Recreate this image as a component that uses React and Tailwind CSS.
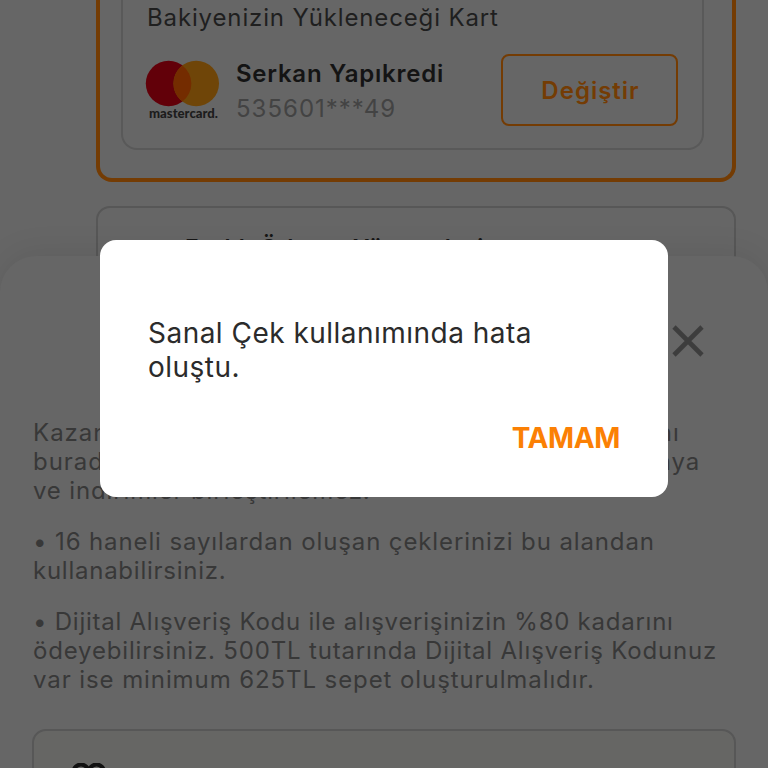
const infoParagraphs = [
  {
    lines: [
      { text: "Kazandığınız Dijital Alışveriş Kuponlarınızın tamamını", tracking: "tracking-[1px]" },
      { text: "buradan kullanabilirsiniz. Dijital kodlar diğer kampanya", tracking: "tracking-[0.94px]" },
      { text: "ve indirimler birleştirilemez.", tracking: "tracking-[0.85px]" },
    ],
  },
  {
    lines: [
      { text: "• 16 haneli sayılardan oluşan çeklerinizi bu alandan", tracking: "tracking-[0.88px]" },
      { text: "kullanabilirsiniz.", tracking: "tracking-[0.75px]" },
    ],
  },
  {
    lines: [
      { text: "• Dijital Alışveriş Kodu ile alışverişinizin %80 kadarını", tracking: "tracking-[0.75px]" },
      { text: "ödeyebilirsiniz. 500TL tutarında Dijital Alışveriş Kodunuz", tracking: "tracking-[0.83px]" },
      { text: "var ise minimum 625TL sepet oluşturulmalıdır.", tracking: "tracking-[0.91px]" },
    ],
  },
];

const App = () => {
  return (
    <div className="relative h-[768px] w-[768px] overflow-hidden bg-[#666666] font-['Inter',sans-serif]">
      {/* PAYMENT OPTIONS */}
      <div className="pl-24 pr-8">
        <div className="h-[182px] rounded-b-[16px] border-4 border-t-0 border-[#743c04] pl-[21px] pr-7 pb-7">
          <SavedCard />
        </div>

        <div className="mt-6 h-[120px] rounded-[14px] border-2 border-[#575757] pl-[87px] pt-[26px]">
          <p className="whitespace-nowrap text-[23px] leading-7 font-semibold tracking-[1.2px] text-[#161616]">
            Farklı Ödeme Yöntemleri
          </p>
        </div>
      </div>

      {/* BOTTOM SHEET */}
      <div className="absolute inset-x-0 top-[256px] h-[512px] rounded-t-[36px] bg-[#666666] px-8 pt-[69px] shadow-[0_-4px_32px_rgba(0,0,0,0.08)]">
        <div className="flex justify-end pr-8">
          <CloseIcon />
        </div>

        <div className="mt-[61px] flex flex-col gap-[22px] pl-px text-[24px] leading-[29px] text-[#383838]">
          {infoParagraphs.map((paragraph, i) => (
            <div key={i}>
              {paragraph.lines.map((line) => (
                <p key={line.text} className={`whitespace-nowrap ${line.tracking}`}>
                  {line.text}
                </p>
              ))}
            </div>
          ))}
        </div>

        <div className="mt-[35px] h-24 rounded-[14px] border-2 border-[#575757] bg-[#666664] pl-9 pt-8">
          <GiftIcon />
        </div>
      </div>

      <ErrorDialog />
    </div>
  );
};

const SavedCard = () => (
  <div className="h-[150px] rounded-b-[16px] border-2 border-t-0 border-[#595959] pl-6 pr-6 pt-1">
    <p className="whitespace-nowrap text-[24px] leading-7 tracking-[0.86px] text-[#1f1f1f]">
      Bakiyenizin Yükleneceği Kart
    </p>
    <div className="mt-[22px] flex h-[72px] items-start">
      <MastercardLogo />
      <div className="ml-4 flex-1 whitespace-nowrap">
        <p className="mt-[5px] text-[24px] leading-[30px] font-semibold tracking-[0.75px] text-[#141414]">
          Serkan Yapıkredi
        </p>
        <p className="mt-1 text-[24px] leading-[32px] tracking-[1px] text-[#434343]">
          535601***49
        </p>
      </div>
      <button className="h-[72px] w-[177px] rounded-[8px] border-2 border-[#743c04] pt-[2px] pl-[2px] text-[24px] font-semibold tracking-[1px] text-[#743c04]">
        Değiştir
      </button>
    </div>
  </div>
);

const MastercardLogo = () => (
  <svg width="73" height="72" viewBox="0 0 73 72" className="shrink-0 overflow-visible">
    <circle cx="21.6" cy="29.5" r="22.8" fill="#620009" />
    <circle cx="49.2" cy="29.5" r="22.8" fill="#6f4508" />
    <path d="M35.4 11.4a22.8 22.8 0 0 1 0 36.2a22.8 22.8 0 0 1 0-36.2Z" fill="#742c00" />
    <text
      x="2"
      y="64.3"
      textLength="69"
      lengthAdjust="spacingAndGlyphs"
      fontFamily="Lato, sans-serif"
      fontSize="12.5"
      fontWeight="900"
      fill="#1c1c1c"
    >
      mastercard.
    </text>
  </svg>
);

const CloseIcon = () => (
  <svg width="32" height="32" viewBox="0 0 32 32" fill="none" stroke="#3d3d3d" strokeWidth="4.6">
    <path d="M2 2 30 30M30 2 2 30" />
  </svg>
);

const GiftIcon = () => (
  <svg width="38" height="32" viewBox="0 0 38 32" fill="none" stroke="#111111" strokeWidth="4">
    <circle cx="11" cy="9" r="7.5" />
    <circle cx="26.5" cy="9" r="7.5" />
  </svg>
);

const ErrorDialog = () => (
  <div className="absolute left-[100px] top-[240px] flex h-[257px] w-[568px] flex-col rounded-[16px] bg-white px-[48px] pt-[76px]">
    <p className="whitespace-nowrap text-[28px] leading-[34px] tracking-[0.48px] text-[#2b2b2b]">
      Sanal Çek kullanımında hata
      <br />
      oluştu.
    </p>
    <button className="mt-[37px] self-end text-[28px] leading-[34px] font-bold tracking-[-0.4px] text-[#fb8004]">
      TAMAM
    </button>
  </div>
);

export default App;
